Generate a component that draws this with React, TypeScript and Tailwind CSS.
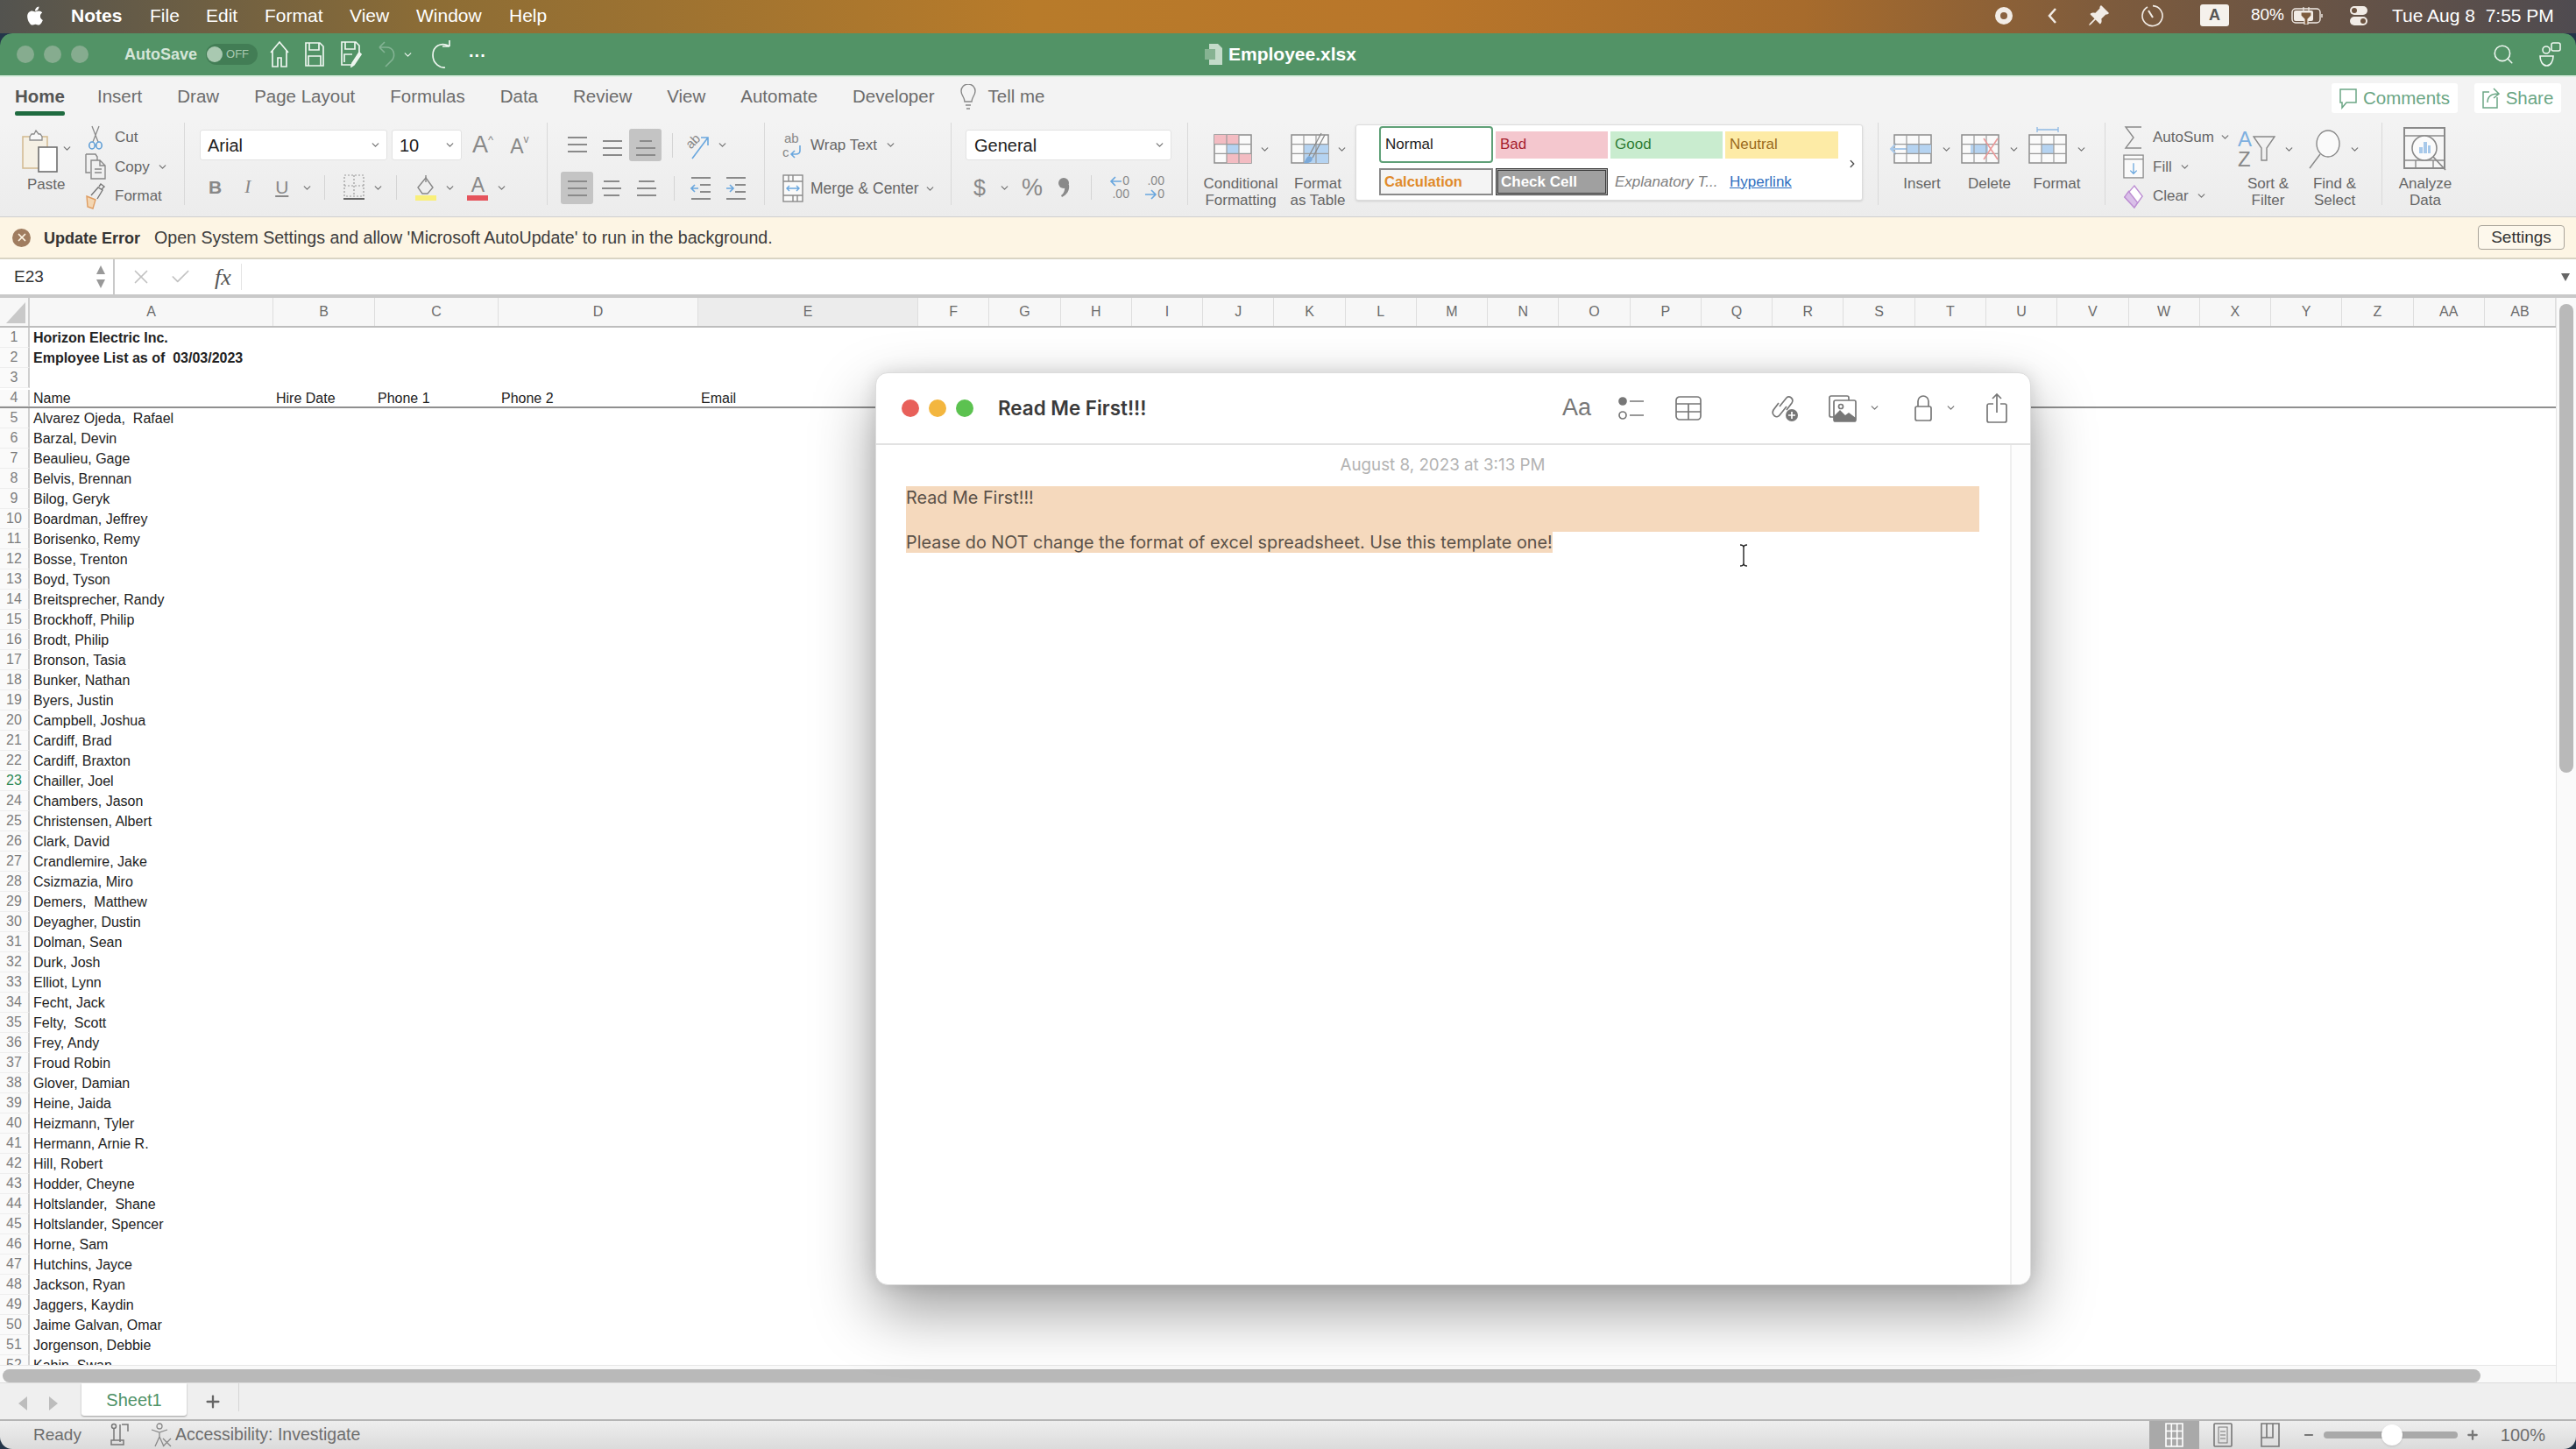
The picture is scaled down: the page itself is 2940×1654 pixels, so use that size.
import React from "react";
import { ChevronDown, ChevronRight, Plus, Search, X, Check, Minus } from "lucide-react";
import { FaApple } from "react-icons/fa";
import { BsPinAngleFill } from "react-icons/bs";

const NAMES = [
  "Alvarez Ojeda,  Rafael", "Barzal, Devin", "Beaulieu, Gage", "Belvis, Brennan", "Bilog, Geryk",
  "Boardman, Jeffrey", "Borisenko, Remy", "Bosse, Trenton", "Boyd, Tyson", "Breitsprecher, Randy",
  "Brockhoff, Philip", "Brodt, Philip", "Bronson, Tasia", "Bunker, Nathan", "Byers, Justin",
  "Campbell, Joshua", "Cardiff, Brad", "Cardiff, Braxton", "Chailler, Joel", "Chambers, Jason",
  "Christensen, Albert", "Clark, David", "Crandlemire, Jake", "Csizmazia, Miro", "Demers,  Matthew",
  "Deyagher, Dustin", "Dolman, Sean", "Durk, Josh", "Elliot, Lynn", "Fecht, Jack", "Felty,  Scott",
  "Frey, Andy", "Froud Robin", "Glover, Damian", "Heine, Jaida", "Heizmann, Tyler", "Hermann, Arnie R.",
  "Hill, Robert", "Hodder, Cheyne", "Holtslander,  Shane", "Holtslander, Spencer", "Horne, Sam",
  "Hutchins, Jayce", "Jackson, Ryan", "Jaggers, Kaydin", "Jaime Galvan, Omar", "Jorgenson, Debbie",
  "Kabin, Swan",
];

const WIDE_COLS = "FGHIJKLMNOPQRSTUVWXYZ".split("").concat(["AA", "AB"]);
const TABS = ["Insert", "Draw", "Page Layout", "Formulas", "Data", "Review", "View", "Automate", "Developer"];

const Chev = ({ className = "" }: { className?: string }) => (
  <ChevronDown size={13} strokeWidth={2.4} className={"text-[#777] shrink-0 " + className} />
);

const Divider = () => <div className="w-px h-[28px] bg-[#d4d4d4] shrink-0" />;

// three horizontal lines for the alignment buttons
const Lines = ({ rows = [0, 0, 0], top = 4 }: { rows?: number[]; top?: number }) => (
  <svg width="24" height="30" viewBox="0 0 24 30" stroke="#8a8a8a" strokeWidth="2">
    {rows.map((inset, i) => (
      <line key={i} x1={1 + inset} x2={23 - inset} y1={top + i * 8} y2={top + i * 8} />
    ))}
  </svg>
);

const Grid = ({ children, w = 46, h = 33 }: { children?: React.ReactNode; w?: number; h?: number }) => (
  <svg width={w + 6} height={h + 8} viewBox={`-3 -4 ${w + 6} ${h + 8}`} fill="none" className="overflow-visible">
    <rect x="0" y="0" width={w} height={h} fill="#fafafa" stroke="#8c8c8c" strokeWidth="1.5" />
    {children}
    <path d={`M${w / 3} 0V${h}M${(2 * w) / 3} 0V${h}M0 ${h / 3}H${w}M0 ${(2 * h) / 3}H${w}`} stroke="#9a9a9a" strokeWidth="1.2" />
  </svg>
);

const SmallRow = ({ icon, label, chev, chevClass = "ml-[8px]" }: { icon: React.ReactNode; label: string; chev?: boolean; chevClass?: string }) => (
  <div className="h-[33.5px] flex items-center">
    <div className="w-[24px] flex justify-center shrink-0">{icon}</div>
    <span className="ml-[10px] text-[17px] text-[#666]">{label}</span>
    {chev && <Chev className={chevClass} />}
  </div>
);

const BigButton = ({ icon, chev = true, gap = "gap-[6px]", lines, className }: { icon: React.ReactNode; chev?: boolean; gap?: string; lines: string[]; className: string }) => (
  <div className={"flex flex-col items-center shrink-0 " + className}>
    <div className={"h-[60px] flex items-center " + gap}>
      {icon}
      {chev && <Chev />}
    </div>
    {lines.map((l) => (
      <div key={l} className="text-[17px] leading-[19px] text-[#666] whitespace-nowrap">{l}</div>
    ))}
  </div>
);

const MenuBar = () => (
  <div className="h-[38px] shrink-0 flex items-center text-white text-[21px] pb-[3px] bg-[linear-gradient(90deg,#53534f_0%,#8d6d35_17%,#b87b2a_40%,#b9762a_55%,#a76b2c_70%,#7d5b3d_82%,#4f4b50_100%)]">
    <FaApple size={24} className="ml-[28px]" />
    <span className="ml-[29px] font-bold w-[90px]">Notes</span>
    <span className="w-[64px]">File</span>
    <span className="w-[67px]">Edit</span>
    <span className="w-[97px]">Format</span>
    <span className="w-[76px]">View</span>
    <span className="w-[106px]">Window</span>
    <span>Help</span>
    <div className="ml-auto flex items-center">
      <div className="w-[20px] h-[20px] rounded-full border-[6px] border-[#f2ece6] bg-[#8a6240]" />
      <svg width="12" height="20" viewBox="0 0 12 20" fill="none" stroke="#f2ece6" strokeWidth="2.5" className="ml-[39px]"><path d="M10 2L3 10l7 8" /></svg>
      <BsPinAngleFill size={26} className="ml-[34px] text-[#f2ece6]" />
      <svg width="28" height="28" viewBox="0 0 28 28" fill="none" stroke="#f2ece6" strokeWidth="1.6" className="ml-[34px]">
        <path d="M9 4a11.5 11.5 0 1 0 6-1.4" />
        <path d="M10 8l5 8" strokeWidth="2" />
      </svg>
      <div className="ml-[41px] w-[33px] h-[25px] bg-[#f5f1ec] rounded-[3px] text-[#555] text-[18px] font-bold flex items-center justify-center">A</div>
      <span className="ml-[25px] text-[19px]">80%</span>
      <svg width="38" height="20" viewBox="0 0 38 20" fill="none" className="ml-[8px]">
        <rect x="1" y="2" width="32" height="16" rx="4" stroke="#f2ece6" strokeWidth="1.4" />
        <rect x="3" y="4" width="22" height="12" rx="2" fill="#f2ece6" />
        <path d="M14 0v6M20 0v6M11 6h12v4l-4 4v6h-4v-6l-4-4z" fill="#7d5b3d" stroke="#f2ece6" strokeWidth="1.2" />
        <path d="M35 8v4" stroke="#f2ece6" strokeWidth="1.4" />
      </svg>
      <svg width="24" height="24" viewBox="0 0 24 24" className="ml-[27px]">
        <rect x="2" y="1" width="20" height="10" rx="5" fill="#f2ece6" />
        <circle cx="7" cy="6" r="3" fill="#6c5340" />
        <rect x="2" y="13" width="20" height="10" rx="5" fill="#f2ece6" />
        <circle cx="17" cy="18" r="3" fill="#6c5340" />
      </svg>
      <span className="ml-[26px] mr-[29px] w-[181px] whitespace-pre">Tue Aug 8  7:55 PM</span>
    </div>
  </div>
);

const TitleBar = () => (
  <div className="h-[50px] shrink-0 bg-[#529366] border-b-2 border-[#dcefe1] rounded-t-[14px] flex items-center text-white">
    <div className="w-[1375px] flex items-center shrink-0">
      <div className="ml-[19px] flex gap-[11px]">
        <div className="w-[20px] h-[20px] rounded-full bg-[#86ac8f]" />
        <div className="w-[20px] h-[20px] rounded-full bg-[#86ac8f]" />
        <div className="w-[20px] h-[20px] rounded-full bg-[#86ac8f]" />
      </div>
      <span className="ml-[41px] text-[18px] font-bold text-[#d4e5d8]">AutoSave</span>
      <div className="ml-[10px] w-[59px] h-[24px] rounded-full bg-[#427d55] flex items-center">
        <div className="ml-[1px] w-[18px] h-[18px] rounded-full bg-[#a9c9b1]" />
        <span className="ml-[4px] text-[13px] text-[#a9c9b1]">OFF</span>
      </div>
      <svg width="24" height="32" viewBox="0 0 24 32" fill="none" stroke="#eef6f0" strokeWidth="1.7" className="ml-[13px]">
        <path d="M2 14L12 2l10 12M4 12v18h6V20h4v10h6V12" />
      </svg>
      <svg width="22" height="28" viewBox="0 0 22 28" fill="none" stroke="#eef6f0" strokeWidth="1.7" className="ml-[17px]">
        <path d="M1 1h16l4 4v22H1zM5 1v8h11V1M4 27V16h14v11" />
      </svg>
      <svg width="24" height="30" viewBox="0 0 24 30" fill="none" stroke="#eef6f0" strokeWidth="1.7" className="ml-[19px]">
        <path d="M1 1h16l4 4v8l-8 14H1zM5 1v8h11V1M4 24V15h9" />
        <path d="M21 13l2 2-8 12-3 2 1-4z" fill="#eef6f0" />
      </svg>
      <svg width="22" height="32" viewBox="0 0 22 32" fill="none" stroke="#84b394" strokeWidth="1.6" className="ml-[18px]">
        <path d="M2 8h8c9 0 10 9 7 14l-8 8M2 8l6-6M2 8l6 6" />
      </svg>
      <Chev className="ml-[6px] text-[#e6f1e9]" />
      <svg width="26" height="34" viewBox="0 0 26 34" fill="none" stroke="#eef6f0" strokeWidth="1.7" className="ml-[20px]">
        <path d="M21 8C11 2 2 8 2 18s9 15 14 14M21 8V1M21 8h-8" />
      </svg>
      <span className="ml-[17px] text-[20px] font-bold tracking-[1px] leading-none pb-[8px]">...</span>
    </div>
    <svg width="22" height="26" viewBox="0 0 22 26" className="shrink-0 -ml-[1px]">
      <path d="M6 1h10l5 5v19H6z" fill="#c3dbc9" />
      <rect x="1" y="7" width="12" height="12" fill="#86b392" />
    </svg>
    <span className="ml-[6px] text-[21px] font-bold">Employee.xlsx</span>
    <div className="ml-auto flex items-center mr-[17px]">
      <Search size={26} strokeWidth={1.5} className="text-[#eef6f0]" />
      <svg width="26" height="28" viewBox="0 0 26 28" fill="none" stroke="#eef6f0" strokeWidth="1.6" className="ml-[27px]">
        <rect x="15" y="1" width="10" height="9" rx="2" />
        <circle cx="9" cy="9" r="4" />
        <path d="M2 16h15c0 6-3 11-7.5 11S2 22 2 16z" />
      </svg>
    </div>
  </div>
);

const TabRow = () => (
  <div className="h-[52px] shrink-0 bg-[#f3f3f3] flex items-start pt-[10px] pl-[17px] text-[20.5px] leading-[24px] text-[#6c6c6c]">
    <div className="flex flex-col w-[57px] mr-[37px]">
      <span className="text-[#555] font-bold">Home</span>
      <div className="mt-[5px] h-[5px] bg-[#1f6b40] rounded-[2px]" />
    </div>
    <div className="flex gap-[40px]">
      {TABS.map((t) => (
        <span key={t}>{t}</span>
      ))}
    </div>
    <svg width="20" height="30" viewBox="0 0 20 30" fill="none" stroke="#888" strokeWidth="1.4" className="ml-[28px] -mt-[2px]">
      <path d="M6 20c0-5-4-7-4-12a8 8 0 0 1 16 0c0 5-4 7-4 12zM7 24h6M8 28h4" />
    </svg>
    <span className="ml-[13px]">Tell me</span>
    <div className="ml-auto mr-[17px] -mt-[3px] flex gap-[19px]">
      <div className="w-[144px] h-[34px] bg-white rounded-[3px] flex items-center justify-center gap-[7px] text-[#6ba685] font-medium">
        <svg width="20" height="26" viewBox="0 0 20 26" fill="none" stroke="#6ba685" strokeWidth="1.5"><path d="M1 3h18v15H8l-5 6v-6H1z" /></svg>
        Comments
      </div>
      <div className="w-[99px] h-[34px] bg-white rounded-[3px] flex items-center justify-center gap-[7px] text-[#6ba685] font-medium">
        <svg width="20" height="26" viewBox="0 0 20 26" fill="none" stroke="#6ba685" strokeWidth="1.5"><path d="M8 6H1v18h16V12M6 18c0-7 5-10 12-10M13 2l6 6-6 5" /></svg>
        Share
      </div>
    </div>
  </div>
);

const RibbonDivider = () => <div className="w-px h-[94px] bg-[#d9d9d9] shrink-0" />;

const Ribbon = () => (
  <div className="h-[108px] shrink-0 bg-[linear-gradient(180deg,#f3f3f3,#ececec)] border-b border-[#cfcfcf] flex items-start">
    {/* clipboard */}
    <div className="w-[210px] shrink-0 flex">
      <div className="w-[72px] ml-[24px] pt-[7px] flex flex-col items-start">
        <div className="flex items-center h-[52px]">
          <svg width="44" height="50" viewBox="0 0 44 50" fill="none">
            <path d="M2 8h28v36H2z" fill="#f5f0e4" stroke="#d2b98f" strokeWidth="1.5" />
            <path d="M10 8l2-3h3l2-4 3 4h2l2 3v4H10z" fill="#f8f8f8" stroke="#8c8c8c" strokeWidth="1.3" />
            <rect x="20" y="20" width="21" height="28" fill="#fff" stroke="#6f6f6f" strokeWidth="1.6" />
          </svg>
          <Chev className="ml-[2px] -mt-[8px]" />
        </div>
        <div className="ml-[7px] mt-[2px] text-[17px] leading-[20px] text-[#666]">Paste</div>
      </div>
      <div className="ml-[1px]">
        <SmallRow label="Cut" icon={
          <svg width="18" height="28" viewBox="0 0 18 28" fill="none" stroke="#8a8a8a" strokeWidth="1.3"><path d="M5 1l7 18M13 1L6 19" /><ellipse cx="5" cy="23" rx="3.2" ry="4" stroke="#5f9ed6" strokeWidth="1.6" /><ellipse cx="13" cy="23" rx="3.2" ry="4" stroke="#5f9ed6" strokeWidth="1.6" /></svg>
        } />
        <SmallRow label="Copy" chev icon={
          <svg width="24" height="30" viewBox="0 0 24 30" fill="none" stroke="#888" strokeWidth="1.4"><path d="M1 1h11l2 3v4M1 1v21h5" /><path d="M7 8h10l6 6v15H7zM17 8v6h6M11 18h8M11 22h8" /></svg>
        } />
        <SmallRow label="Format" icon={
          <svg width="24" height="30" viewBox="0 0 24 30" fill="none"><path d="M2 15l10 4-3 10-6-2z" fill="#f3d6b2" stroke="#df9d62" strokeWidth="1.4" /><path d="M7 14l8-9 5 3-6 10" stroke="#777" strokeWidth="1.4" /><path d="M16 4l2-3 4 3-3 3" stroke="#777" strokeWidth="1.4" /></svg>
        } />
      </div>
    </div>
    <RibbonDivider />
    {/* font */}
    <div className="w-[413px] shrink-0 pt-[8px]">
      <div className="flex items-center h-[35px]">
        <div className="ml-[17px] w-[214px] h-[35px] bg-white rounded-[3px] border border-[#e2e2e2] flex items-center pl-[8px] pr-[6px] text-[20px] text-[#222]">
          Arial<Chev className="ml-auto" />
        </div>
        <div className="ml-[5px] w-[80px] h-[35px] bg-white rounded-[3px] border border-[#e2e2e2] flex items-center pl-[8px] pr-[6px] text-[20px] text-[#222]">
          10<Chev className="ml-auto" />
        </div>
        <span className="ml-[12px] text-[27px] leading-none text-[#888]">A</span>
        <span className="text-[13px] text-[#888] -mt-[12px]">^</span>
        <span className="ml-[19px] text-[23px] leading-none text-[#888] mt-[3px]">A</span>
        <span className="text-[12px] text-[#888] -mt-[14px]">v</span>
      </div>
      <div className="flex items-center h-[36px] mt-[13px] text-[21px] text-[#888]">
        <span className="ml-[27px] font-bold">B</span>
        <span className="ml-[26px] italic font-[Liberation_Serif]">I</span>
        <span className="ml-[28px] underline underline-offset-2">U</span>
        <Chev className="ml-[15px]" />
        <div className="ml-[13px]"><Divider /></div>
        <svg width="26" height="30" viewBox="0 0 26 30" fill="none" className="ml-[20px]">
          <path d="M2 1h22v24H2zM13 1v24M2 13h22" stroke="#999" strokeWidth="1.2" strokeDasharray="2 2" />
          <path d="M1 28h24" stroke="#666" strokeWidth="2" />
        </svg>
        <Chev className="ml-[8px]" />
        <div className="ml-[14px]"><Divider /></div>
        <svg width="26" height="30" viewBox="0 0 26 30" fill="none" className="ml-[20px]">
          <path d="M4 15L13 4l8 11-6 7H9z" stroke="#888" strokeWidth="1.4" />
          <path d="M13 1v8" stroke="#888" strokeWidth="1.4" />
          <rect x="1" y="24" width="24" height="6" fill="#f9ef7a" />
        </svg>
        <Chev className="ml-[8px]" />
        <div className="ml-[12px] flex flex-col items-center w-[26px]">
          <span className="text-[23px] leading-[23px]">A</span>
          <div className="w-[24px] h-[6px] bg-[#e5545c]" />
        </div>
        <Chev className="ml-[8px]" />
      </div>
    </div>
    <RibbonDivider />
    {/* alignment */}
    <div className="w-[247px] shrink-0 pt-[7px]">
      <div className="flex items-center h-[37px]">
        <div className="ml-[22px]"><Lines top={6} /></div>
        <div className="ml-[16px]"><Lines top={10} /></div>
        <div className="ml-[7px] w-[37px] h-[37px] bg-[#c4c4c4] rounded-[3px] flex items-center justify-center"><Lines top={10} rows={[4, 0, 0]} /></div>
        <div className="ml-[12px]"><Divider /></div>
        <svg width="28" height="34" viewBox="0 0 28 34" fill="none" className="ml-[16px]">
          <text x="0" y="17" fontSize="15" fill="#888" fontFamily="Liberation Sans" transform="rotate(-45 8 14)">ab</text>
          <path d="M6 32L24 8M16 8h8v9" stroke="#6aa7de" strokeWidth="1.6" />
        </svg>
        <Chev className="ml-[6px]" />
      </div>
      <div className="flex items-center h-[37px] mt-[12px]">
        <div className="ml-[15px] w-[37px] h-[37px] bg-[#c4c4c4] rounded-[3px] flex items-center justify-center"><Lines top={7} /></div>
        <div className="ml-[9px]"><Lines top={7} rows={[2, 0, 2]} /></div>
        <div className="ml-[16px]"><Lines top={7} rows={[2, 0, 0]} /></div>
        <div className="ml-[19px]"><Divider /></div>
        <svg width="24" height="30" viewBox="0 0 24 30" fill="none" className="ml-[18px]" stroke="#8a8a8a" strokeWidth="2">
          <path d="M1 3h22M1 27h22M11 11h12M11 19h12" />
          <path d="M9 15H1M5 11l-4 4 4 4" stroke="#6aa7de" strokeWidth="1.6" />
        </svg>
        <svg width="24" height="30" viewBox="0 0 24 30" fill="none" className="ml-[16px]" stroke="#8a8a8a" strokeWidth="2">
          <path d="M1 3h22M1 27h22M11 11h12M11 19h12" />
          <path d="M1 15h8M5 11l4 4-4 4" stroke="#6aa7de" strokeWidth="1.6" />
        </svg>
      </div>
    </div>
    <RibbonDivider />
    {/* wrap */}
    <div className="w-[212px] shrink-0 pl-[19px] pt-[8px] text-[17px] text-[#666]">
      <div className="flex items-center h-[35px]">
        <svg width="26" height="32" viewBox="0 0 26 32" fill="none">
          <text x="3" y="13" fontSize="15" fill="#888" fontFamily="Liberation Sans">ab</text>
          <text x="1" y="29" fontSize="15" fill="#888" fontFamily="Liberation Sans">c</text>
          <path d="M21 16v6c0 3-2 4-5 4h-4M15 22l-4 4 4 4" stroke="#6aa7de" strokeWidth="1.6" />
        </svg>
        <span className="ml-[7px]">Wrap Text</span>
        <Chev className="ml-[9px]" />
      </div>
      <div className="flex items-center h-[36px] mt-[14px]">
        <svg width="26" height="32" viewBox="0 0 26 32" fill="none" stroke="#8a8a8a" strokeWidth="1.4">
          <rect x="2" y="1" width="22" height="30" fill="#fafafa" />
          <path d="M2 8h22M2 24h22M13 1v7M13 24v7M8 1v7M18 24v7" />
          <path d="M6 16h14M9 13l-3 3 3 3M17 13l3 3-3 3" stroke="#6aa7de" />
        </svg>
        <span className="ml-[7px] text-[17.5px]">Merge &amp; Center</span>
        <Chev className="ml-[6px]" />
      </div>
    </div>
    <RibbonDivider />
    {/* number */}
    <div className="w-[269px] shrink-0 pt-[8px]">
      <div className="ml-[16px] w-[235px] h-[35px] bg-white rounded-[3px] border border-[#e2e2e2] flex items-center pl-[9px] pr-[6px] text-[20px] text-[#222]">
        General<Chev className="ml-auto" />
      </div>
      <div className="flex items-center h-[36px] mt-[13px] text-[#888]">
        <span className="ml-[25px] text-[25px] leading-none">$</span>
        <Chev className="ml-[15px]" />
        <span className="ml-[13px] text-[27px] leading-none">%</span>
        <svg width="14" height="24" viewBox="0 0 14 24" fill="#8a8a8a" className="ml-[17px]">
          <circle cx="7" cy="7" r="6" />
          <path d="M8 9h5c1 6-2 11-8 14l-1-2c3-2 5-6 4-12z" />
        </svg>
        <div className="ml-[24px]"><Divider /></div>
        <div className="ml-[17px] w-[26px] flex flex-col text-[14px] leading-[15px] items-end text-[#888]">
          <span className="flex items-center">
            <svg width="15" height="12" viewBox="0 0 15 12" fill="none" stroke="#6aa7de" strokeWidth="1.6"><path d="M14 6H2M7 1L2 6l5 5" /></svg>0
          </span>
          <span>.00</span>
        </div>
        <div className="ml-[14px] w-[26px] flex flex-col text-[14px] leading-[15px] items-end text-[#888]">
          <span>.00</span>
          <span className="flex items-center">
            <svg width="15" height="12" viewBox="0 0 15 12" fill="none" stroke="#6aa7de" strokeWidth="1.6"><path d="M1 6h12M8 1l5 5-5 5" /></svg>0
          </span>
        </div>
      </div>
    </div>
    <RibbonDivider />
    {/* styles */}
    <div className="w-[787px] shrink-0 flex">
      <BigButton className="ml-[12px] w-[96px]" lines={["Conditional", "Formatting"]} icon={
        <Grid w={42} h={32}>
          <path d="M0 0h28v11H0zM14 21h28v11H14z" fill="#f3bcc2" />
          <path d="M14 11h14v10H14z" fill="#b5d3f1" />
        </Grid>
      } />
      <BigButton className="ml-[4px] w-[72px]" lines={["Format", "as Table"]} icon={
        <div className="relative">
          <Grid w={42} h={32}>
            <path d="M14 11h28v21H14z" fill="#b5d3f1" />
          </Grid>
          <svg width="28" height="42" viewBox="0 0 28 42" fill="none" className="absolute left-[15px] top-[0px]">
            <path d="M22 2L8 28M26 4L12 30" stroke="#8a8a8a" strokeWidth="1.3" fill="#fff" />
            <path d="M8 28c-3 1-4 5-6 8 6 1 10-1 10-6z" fill="#7ba9d8" />
          </svg>
        </div>
      } />
      <div className="ml-[7px] mt-[2px] w-[579px] h-[87px] bg-white border border-[#dcdcdc] rounded-[3px] shadow-sm flex">
        <div className="ml-[26px] mt-[1px] w-[528px] text-[17px]">
          <div className="flex items-center gap-[3px] h-[42px]">
            <div className="w-[130px] h-[42px] border-2 border-[#5fa077] rounded-[4px] flex items-center pl-[5px] text-[#222]">Normal</div>
            <div className="w-[128px] h-[31px] bg-[#f4c7ce] flex items-center pl-[5px] text-[#a6212e]">Bad</div>
            <div className="w-[128px] h-[31px] bg-[#c9eccf] flex items-center pl-[5px] text-[#2f7d35]">Good</div>
            <div className="w-[129px] h-[31px] bg-[#fdeba6] flex items-center pl-[5px] text-[#9a6a1c]">Neutral</div>
          </div>
          <div className="flex items-center gap-[3px] h-[31px] mt-[6px]">
            <div className="w-[130px] h-[31px] bg-[#f4f4f4] border-2 border-[#8a8a8a] flex items-center pl-[4px] text-[#e08a2a] font-bold text-[16.5px]">Calculation</div>
            <div className="w-[128px] h-[31px] bg-[#a0a0a0] border-[3px] border-double border-[#3c3c3c] flex items-center pl-[3px] text-white font-bold">Check Cell</div>
            <div className="w-[128px] h-[31px] flex items-center pl-[5px] text-[#808080] italic whitespace-nowrap">Explanatory T...</div>
            <div className="w-[129px] h-[31px] flex items-center pl-[5px] text-[#2f6fc0] underline">Hyperlink</div>
          </div>
        </div>
        <div className="flex-1 flex items-center justify-center mt-[2px]">
          <ChevronRight size={14} strokeWidth={2.5} className="text-[#555]" />
        </div>
      </div>
    </div>
    <RibbonDivider />
    {/* cells */}
    <div className="w-[258px] shrink-0 flex pl-[11px]">
      <BigButton className="w-[77px]" gap="gap-[8px]" lines={["Insert"]} icon={
        <Grid w={42} h={32}>
          <path d="M14 11h28v10H14z" fill="#b5d3f1" />
          <path d="M14 16H-4M2 10l-6 6 6 6" stroke="#a9c9ea" strokeWidth="2" />
        </Grid>
      } />
      <BigButton className="w-[77px]" gap="gap-[8px]" lines={["Delete"]} icon={
        <div className="relative">
          <Grid w={42} h={32}>
            <path d="M10 11h20v10H10z" fill="#b5d3f1" />
          </Grid>
          <svg width="24" height="32" viewBox="0 0 24 32" fill="none" stroke="#ea9a9a" strokeWidth="1.6" className="absolute left-[24px] top-[4px]">
            <path d="M4 4l16 24M20 4L4 28" />
          </svg>
        </div>
      } />
      <BigButton className="w-[77px]" gap="gap-[8px]" lines={["Format"]} icon={
        <Grid w={42} h={32}>
          <path d="M14 11h14v10H14z" fill="#b5d3f1" />
          <path d="M9 -6h24M9 -9v6M33 -9v6" stroke="#8fb9e3" strokeWidth="1.3" />
        </Grid>
      } />
    </div>
    <RibbonDivider />
    {/* editing */}
    <div className="w-[315px] shrink-0 flex">
      <div className="pl-[20px] w-[147px] shrink-0">
        <SmallRow label="AutoSum" chev chevClass="ml-[6px]" icon={
          <svg width="22" height="28" viewBox="0 0 22 28" fill="none" stroke="#8a8a8a" strokeWidth="1.4"><path d="M20 2H2l9 12L2 26h18" /></svg>
        } />
        <SmallRow label="Fill" chev icon={
          <svg width="26" height="30" viewBox="0 0 26 30" fill="none" stroke="#8a8a8a" strokeWidth="1.4"><rect x="1" y="1" width="24" height="28" fill="#fafafa" /><path d="M1 6h24" /><path d="M13 11v13M9 20l4 4 4-4" stroke="#6aa7de" /></svg>
        } />
        <SmallRow label="Clear" chev icon={
          <svg width="26" height="30" viewBox="0 0 26 30" fill="none" stroke="#bd8fd3" strokeWidth="1.5"><path d="M14 2l10 13-10 14L2 16z" fill="#fff" /><path d="M2 16l5-7 11 14-4 6z" fill="#d9bfe8" /></svg>
        } />
      </div>
      <BigButton className="w-[77px]" gap="gap-[9px]" lines={["Sort &", "Filter"]} icon={
        <div className="flex items-start gap-[1px] -ml-[4px]">
          <div className="flex flex-col text-[24px] leading-[23px]">
            <span className="text-[#7fb0e0]">A</span>
            <span className="text-[#888]">Z</span>
          </div>
          <svg width="26" height="40" viewBox="0 0 26 40" fill="none" stroke="#888" strokeWidth="1.4" className="mt-[6px]"><path d="M1 3h24L16 16v14h-6V16z" /></svg>
        </div>
      } />
      <BigButton className="w-[75px]" gap="gap-[10px]" lines={["Find &", "Select"]} icon={
        <svg width="36" height="46" viewBox="0 0 36 46" fill="none" stroke="#888" strokeWidth="1.4">
          <ellipse cx="22" cy="17" rx="13" ry="15" fill="#fafafa" />
          <path d="M13 29L1 45" />
        </svg>
      } />
    </div>
    <RibbonDivider />
    {/* analyze */}
    <div className="w-[98px] shrink-0 flex flex-col items-center">
      <div className="h-[60px] flex items-center">
        <svg width="50" height="50" viewBox="0 0 50 50" fill="none" stroke="#8a8a8a" strokeWidth="1.4">
          <rect x="1" y="1" width="46" height="46" fill="#f6f6f6" strokeWidth="2" />
          <path d="M1 10h46M1 38h46M14 38v9M34 38v9" />
          <circle cx="24" cy="24" r="14" fill="#fbfbfb" strokeWidth="1.6" />
          <path d="M34 34l14 15" strokeWidth="1.8" />
          <path d="M18 30v-7h4v7zM23 30V17h4v13zM28 30v-9h3v9z" fill="#a8c9ea" stroke="none" />
        </svg>
      </div>
      <div className="text-[17px] leading-[19px] text-[#666]">Analyze</div>
      <div className="text-[17px] leading-[19px] text-[#666]">Data</div>
    </div>
  </div>
);

const UpdateBar = () => (
  <div className="h-[48px] shrink-0 bg-[#fdf5e4] border-b-2 border-[#d9d4c4] flex items-center text-[#333]">
    <div className="ml-[14px] w-[21px] h-[21px] rounded-full bg-[#a07d60] flex items-center justify-center">
      <X size={14} strokeWidth={3} className="text-[#fdf5e4]" />
    </div>
    <span className="ml-[15px] w-[112px] whitespace-nowrap font-bold text-[18px] pt-[2px]">Update Error</span>
    <span className="ml-[14px] text-[19.6px] text-[#3c3c3c] pt-[2px]">Open System Settings and allow 'Microsoft AutoUpdate' to run in the background.</span>
    <div className="ml-auto mr-[13px] w-[99px] h-[28px] rounded-[4px] border border-[#a9a49a] bg-[#fdf8ec] flex items-center justify-center text-[19px] text-[#333]">Settings</div>
  </div>
);

const FormulaBar = () => (
  <div className="h-[44px] shrink-0 bg-white border-b-[4px] border-[#c9c9c9] flex items-center">
    <div className="w-[131px] h-full border-r-2 border-[#c9c9c9] flex items-center pl-[16px] pr-[9px] text-[19px] text-[#333]">
      E23
      <div className="ml-auto flex flex-col gap-[6px]">
        <div className="w-0 h-0 border-x-[5px] border-x-transparent border-b-[10px] border-b-[#999]" />
        <div className="w-0 h-0 border-x-[5px] border-x-transparent border-t-[10px] border-t-[#999]" />
      </div>
    </div>
    <X size={26} strokeWidth={1.6} className="ml-[17px] text-[#c2c2c2]" />
    <Check size={26} strokeWidth={1.6} className="ml-[19px] text-[#c2c2c2]" />
    <span className="ml-[26px] text-[26px] italic text-[#555] font-[Liberation_Serif]">fx</span>
    <div className="ml-[11px] w-px h-[30px] bg-[#e3e3e3]" />
    <div className="ml-auto mr-[7px] w-0 h-0 border-x-[5px] border-x-transparent border-t-[9px] border-t-[#666]" />
  </div>
);

const ColHead = ({ label, className }: { label: string; className: string }) => (
  <div className={"h-full flex items-center justify-center border-r border-[#dedede] " + className}>{label}</div>
);

const RowNum = ({ n }: { n: number }) => (
  <div className={"w-[34px] h-full shrink-0 bg-[#fafafa] border-r-2 border-b border-b-[#eeeeee] border-r-[#cfcfcf] flex items-center justify-center text-[16px] " + (n === 23 ? "text-[#2f8a57] bg-[#eeeeee]" : "text-[#7d7d7d]")}>{n}</div>
);

const Row = ({ n, children }: { n: number; children?: React.ReactNode }) => (
  <div className="h-[23px] flex items-center whitespace-pre">
    <RowNum n={n} />
    <div className="pl-[4px]">{children}</div>
  </div>
);

const Sheet = () => (
  <div className="flex-1 min-h-0 flex bg-white">
    <div className="flex-1 min-w-0 flex flex-col">
      <div className="h-[34px] shrink-0 flex bg-[#f7f7f7] border-b-2 border-[#bdbdbd] text-[16px] text-[#6b6b6b]">
        <div className="w-[34px] shrink-0 border-r-2 border-[#cfcfcf] flex items-end justify-end pr-[3px] pb-[3px]">
          <div className="w-0 h-0 border-l-[22px] border-l-transparent border-b-[24px] border-b-[#c9c9c9]" />
        </div>
        <ColHead label="A" className="w-[278px] shrink-0" />
        <ColHead label="B" className="w-[116px] shrink-0" />
        <ColHead label="C" className="w-[141px] shrink-0" />
        <ColHead label="D" className="w-[228px] shrink-0" />
        <ColHead label="E" className="w-[251px] shrink-0 bg-[#ececec]" />
        {WIDE_COLS.map((c) => (
          <ColHead key={c} label={c} className="flex-1" />
        ))}
      </div>
      <div className="flex-1 min-h-0 overflow-hidden text-[16px] leading-none text-[#222]">
        <Row n={1}><b>Horizon Electric Inc.</b></Row>
        <Row n={2}><span className="font-bold whitespace-pre">Employee List as of  03/03/2023</span></Row>
        <Row n={3} />
        <div className="h-[23px] flex items-center border-b-2 border-[#8f8f8f] pt-[2px]">
          <RowNum n={4} />
          <div className="w-[278px] pl-[4px] shrink-0">Name</div>
          <div className="w-[116px] pl-[3px] shrink-0">Hire Date</div>
          <div className="w-[141px] pl-[3px] shrink-0">Phone 1</div>
          <div className="w-[228px] pl-[3px] shrink-0">Phone 2</div>
          <div className="pl-[3px]">Email</div>
        </div>
        {NAMES.map((name, i) => (
          <Row key={name} n={i + 5}>{name}</Row>
        ))}
      </div>
      <div className="h-[20px] shrink-0 bg-[#f9f9f9] border-t border-[#e6e6e6] pl-[3px] pr-[86px] pt-[4px]">
        <div className="h-[15px] rounded-full bg-[#b9b9b9]" />
      </div>
    </div>
    <div className="w-[23px] shrink-0 bg-[#fafafa] border-l border-[#e6e6e6] pt-[7px] pl-[3px] pr-[3px]">
      <div className="h-[535px] rounded-full bg-[#b9b9b9]" />
    </div>
  </div>
);

const TabStrip = () => (
  <div className="h-[42px] shrink-0 bg-[#efefef] flex items-start border-t border-[#dcdcdc]">
    <div className="ml-[21px] mt-[15px] w-0 h-0 border-y-[8px] border-y-transparent border-r-[10px] border-r-[#bdbdbd]" />
    <div className="ml-[25px] mt-[15px] w-0 h-0 border-y-[8px] border-y-transparent border-l-[10px] border-l-[#bdbdbd]" />
    <div className="ml-[27px] w-[120px] h-[37px] bg-white rounded-b-[3px] shadow-[0_1px_2px_rgba(0,0,0,0.35)] flex items-center justify-center text-[20px] font-medium text-[#4f9268]">Sheet1</div>
    <Plus size={22} strokeWidth={2.5} className="ml-[19px] mt-[10px] text-[#666]" />
    <div className="ml-[18px] w-px h-[32px] bg-[#d6d6d6]" />
  </div>
);

const StatusBar = () => (
  <div className="h-[34px] shrink-0 bg-[linear-gradient(180deg,#eeeeee,#dbdbdb)] border-t-2 border-[#b5b5b5] flex items-center text-[19px] text-[#6e6e6e]">
    <span className="ml-[38px]">Ready</span>
    <svg width="24" height="28" viewBox="0 0 24 28" fill="none" stroke="#777" strokeWidth="1.5" className="ml-[32px]">
      <circle cx="5" cy="4" r="2.5" />
      <path d="M5 7v13M14 2h7v8M2 25h14v-5H2z" />
      <path d="M12 2v20" />
    </svg>
    <svg width="26" height="30" viewBox="0 0 26 30" fill="none" stroke="#888" strokeWidth="1.3" className="ml-[22px]">
      <circle cx="11" cy="5" r="3" />
      <path d="M2 9l9 3 9-3M11 12v5l-5 11M11 17l5 11" />
      <path d="M15 19l9 9M24 19l-9 9" stroke="#888" />
    </svg>
    <span className="ml-[3px] text-[19.5px]">Accessibility: Investigate</span>
    <div className="ml-auto h-full flex items-center">
      <div className="w-[57px] h-full bg-[#a9a9a9] flex items-center justify-center">
        <svg width="21" height="28" viewBox="0 0 21 28" fill="none" stroke="#fff" strokeWidth="1.6"><path d="M1 1h19v26H1zM7.3 1v26M13.7 1v26M1 9.5h19M1 18h19" /></svg>
      </div>
      <svg width="22" height="28" viewBox="0 0 22 28" fill="none" stroke="#777" strokeWidth="1.6" className="ml-[16px]"><rect x="1" y="1" width="20" height="26" rx="1" /><rect x="6" y="5" width="10" height="18" strokeWidth="1" /><path d="M8 10h6M8 14h6M8 18h6" strokeWidth="1" /></svg>
      <svg width="22" height="28" viewBox="0 0 22 28" fill="none" stroke="#777" strokeWidth="1.6" className="ml-[32px]"><path d="M1 1h20v26H1zM1 17h13V1M7 1v16" /></svg>
      <Minus size={14} strokeWidth={3.5} className="ml-[26px] text-[#777]" />
      <div className="ml-[10px] w-[153px] h-[8px] rounded-full bg-[#a9a9a9] relative">
        <div className="absolute left-[66px] -top-[8px] w-[24px] h-[24px] rounded-full bg-white shadow-sm" />
      </div>
      <Plus size={16} strokeWidth={3.5} className="ml-[9px] text-[#777]" />
      <span className="ml-[24px] mr-[35px] text-[20px]">100%</span>
    </div>
  </div>
);

const NotesWindow = () => (
  <div className="absolute left-[999px] top-[425px] w-[1319px] h-[1042px] bg-white rounded-[14px] border border-[#dcdcdc] shadow-[0_30px_70px_rgba(0,0,0,0.38),0_0_20px_rgba(0,0,0,0.12)] flex flex-col overflow-hidden font-['Inter',sans-serif]">
    <div className="h-[82px] shrink-0 border-b-2 border-[#e2e2e2] flex items-center pb-[1px]">
      <div className="ml-[29px] w-[20px] h-[20px] rounded-full bg-[#e8605a]" />
      <div className="ml-[11px] w-[20px] h-[20px] rounded-full bg-[#f3b63f]" />
      <div className="ml-[11px] w-[20px] h-[20px] rounded-full bg-[#5cc250]" />
      <span className="ml-[28px] text-[22.4px] font-semibold text-[#3a3a3a]">Read Me First!!!</span>
      <div className="ml-auto flex items-center text-[#777]">
        <span className="w-[31px] leading-none whitespace-nowrap font-['Liberation_Sans'] text-[27px]">Aa</span>
        <svg width="30" height="30" viewBox="0 0 30 30" fill="none" stroke="#777" strokeWidth="1.7" className="ml-[33px]">
          <circle cx="5" cy="7" r="4" fill="#777" />
          <circle cx="5" cy="23" r="4" />
          <path d="M13 7h16M13 23h16" />
        </svg>
        <svg width="30" height="28" viewBox="0 0 30 28" fill="none" stroke="#777" strokeWidth="1.7" className="ml-[35px]">
          <rect x="1" y="1" width="28" height="26" rx="4" />
          <path d="M1 9h28M1 18h28M15 9v18" />
        </svg>
        <svg width="32" height="32" viewBox="0 0 32 32" fill="none" stroke="#777" strokeWidth="1.7" className="ml-[79px]">
          <path d="M10 14l8-10c3-3 9 1 6 6l-6 8" />
          <path d="M18 14l-8 10c-3 4-10 0-7-6l6-8" />
          <circle cx="24" cy="24" r="7" fill="#777" stroke="none" />
          <path d="M24 20v8M20 24h8" stroke="#fff" />
        </svg>
        <svg width="32" height="32" viewBox="0 0 32 32" fill="none" stroke="#777" strokeWidth="1.7" className="ml-[34px]">
          <path d="M6 26H3a2 2 0 0 1-2-2V4a2 2 0 0 1 2-2h18a2 2 0 0 1 2 2v3" />
          <rect x="6" y="7" width="25" height="24" rx="2" fill="#fff" />
          <path d="M6 31V25l7-7 6 6 4-3 8 6v4z" fill="#777" stroke="none" />
          <circle cx="14" cy="14" r="2.5" />
        </svg>
        <Chev className="ml-[14px]" />
        <svg width="20" height="30" viewBox="0 0 20 30" fill="none" stroke="#777" strokeWidth="1.7" className="ml-[39px]">
          <rect x="1" y="13" width="18" height="16" rx="2" />
          <path d="M4 13V7a6 6 0 0 1 12 0v6" />
        </svg>
        <Chev className="ml-[15px]" />
        <svg width="24" height="34" viewBox="0 0 24 34" fill="none" stroke="#777" strokeWidth="1.7" className="ml-[34px] mr-[26px]">
          <path d="M8 12H3a2 2 0 0 0-2 2v17a2 2 0 0 0 2 2h18a2 2 0 0 0 2-2V14a2 2 0 0 0-2-2h-5M12 22V2M7 6l5-5 5 5" />
        </svg>
      </div>
    </div>
    <div className="flex-1 flex min-h-0">
      <div className="flex-1 min-w-0 pl-[34px] pr-[35px]">
        <div className="h-[47px] flex items-center justify-center text-[18.8px] text-[#b3b3b3]">August 8, 2023 at 3:13 PM</div>
        <div className="h-[52px] bg-[#f5d9bd] text-[19.8px] leading-[26px] text-[#5a5148]">Read Me First!!!</div>
        <div className="w-fit h-[24px] bg-[#f5d9bd] text-[19.8px] leading-[24px] text-[#5a5148] whitespace-nowrap">Please do NOT change the format of excel spreadsheet. Use this template one!</div>
      </div>
      <div className="w-[23px] shrink-0 border-l-2 border-[#efefef] bg-[#fdfdfd]" />
    </div>
    <svg width="10" height="26" viewBox="0 0 10 26" fill="none" stroke="#222" strokeWidth="1.4" className="absolute left-[985px] top-[195px]">
      <path d="M1 1c2 0 4 1 4 3v18c0 2-2 3-4 3M9 1c-2 0-4 1-4 3M9 25c-2 0-4-1-4-3" />
    </svg>
  </div>
);

export default function App() {
  return (
    <div className="relative w-[2940px] h-[1654px] overflow-hidden flex flex-col bg-[#24364a] font-['Liberation_Sans',Arial,sans-serif]">
      <MenuBar />
      <div className="flex-1 min-h-0 flex flex-col rounded-[14px] overflow-hidden">
        <TitleBar />
        <TabRow />
        <Ribbon />
        <UpdateBar />
        <FormulaBar />
        <Sheet />
        <TabStrip />
        <StatusBar />
      </div>
      <NotesWindow />
    </div>
  );
}
